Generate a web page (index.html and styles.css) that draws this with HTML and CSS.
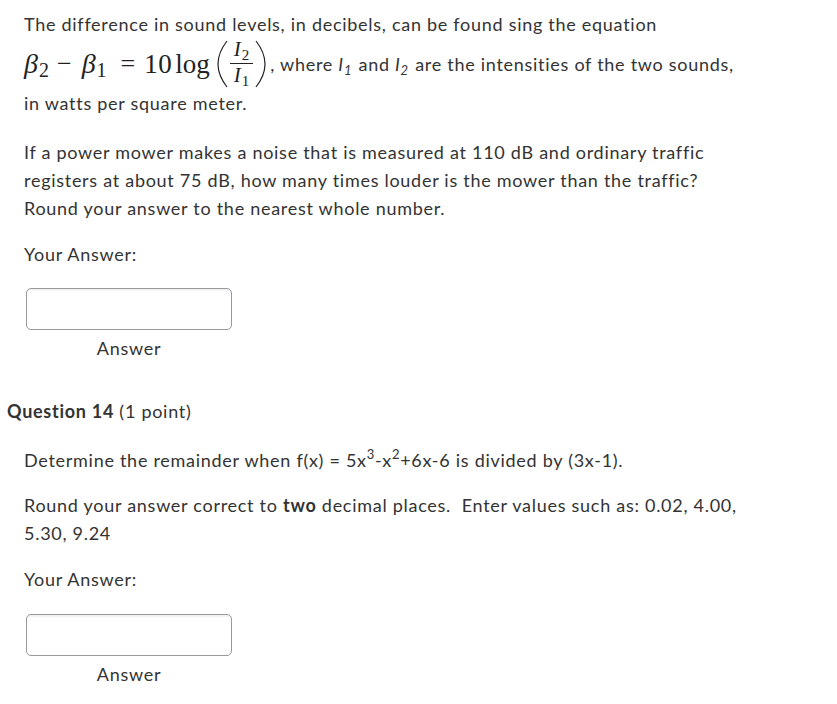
FILE: index.html
```html
<!DOCTYPE html>
<html>
<head>
<meta charset="utf-8">
<link rel="stylesheet" href="styles.css">
</head>
<body>
<div class="page">
  <div class="qbody first">
    <div class="para p1">
      <div class="line">The difference in sound levels, in decibels, can be found sing the equation</div>
      <div class="eq-line">
        <span class="math">
          <span class="mi b2">β</span><span class="sub">2</span>
          <span class="mo minus">−</span>
          <span class="mi">β</span><span class="sub">1</span>
          <span class="mo eq">=</span>
          <span class="mn">10</span><span class="fn">log</span>
          <svg class="paren" width="12" height="48" viewBox="0 0 12 48"><path d="M11 1 C4 10 2 18 2 24 C2 30 4 38 11 47" fill="none" stroke="#222" stroke-width="1.2"/></svg>
          <span class="frac">
            <span class="num"><i>I</i><span class="fsub">2</span></span>
            <span class="den"><i>I</i><span class="fsub">1</span></span>
          </span>
          <svg class="paren" width="12" height="48" viewBox="0 0 12 48"><path d="M1 1 C8 10 10 18 10 24 C10 30 8 38 1 47" fill="none" stroke="#222" stroke-width="1.2"/></svg>
        </span>
        <span class="after">, where <i>I<sub>1</sub></i> and <i>I<sub>2</sub></i> are the intensities of the two sounds,</span>
      </div>
      <div class="line">in watts per square meter.</div>
    </div>
    <p class="para p2">If a power mower makes a noise that is measured at 110 dB and ordinary traffic registers at about 75 dB, how many times louder is the mower than the traffic? Round your answer to the nearest whole number.</p>
    <p class="your">Your Answer:</p>
    <div class="answer-box"><div class="input"></div><div class="label">Answer</div></div>
  </div>

  <h2 class="qtitle"><b>Question 14</b> (1 point)</h2>

  <div class="qbody">
    <p class="para p3">Determine the remainder when f(x) = 5x<sup>3</sup>-x<sup>2</sup>+6x-6 is divided by (3x-1).</p>
    <p class="para p4">Round your answer correct to <b>two</b> decimal places.&nbsp; Enter values such as: 0.02, 4.00, 5.30, 9.24</p>
    <p class="your y2">Your Answer:</p>
    <div class="answer-box second"><div class="input"></div><div class="label">Answer</div></div>
  </div>
</div>
</body>
</html>
```
FILE: styles.css
```css
html, body { margin: 0; padding: 0; background: #fff; }
body {
  font-family: Lato, "Open Sans", sans-serif;
  font-size: 18px;
  letter-spacing: 0.72px;
  color: #333;
  line-height: 28px;
}
.page { padding-top: 10px; }
.qbody { padding-left: 24px; width: 724px; }
.para, .your { margin: 0; }
.line { height: 28px; white-space: nowrap; }
.eq-line { display: flex; align-items: center; height: 51px; white-space: nowrap; }
.math { display: flex; align-items: center; font-family: "Liberation Serif", "DejaVu Serif", serif; font-size: 26px; color: #222; letter-spacing: 0; line-height: 30px; }
.mi { font-style: italic; font-size: 28px; }
.sub { font-size: 20px; position: relative; top: 6px; margin-left: 1px; }
.mo.minus { margin: 0 10px 0 8px; }
.mo.eq { margin: 0 9px 0 14px; }
.mn, .fn { font-size: 27px; }
.mn { letter-spacing: 0.5px; }
.fn { margin-left: 3px; }
.paren { display: block; margin-left: 6px; }
.paren + .frac { margin-left: 2px; }
.frac + .paren { margin-left: 2px; }
.frac { display: flex; flex-direction: column; align-items: center; font-size: 21px; line-height: 21px; }
.frac i { font-style: italic; }
.num { border-bottom: 1px solid #222; padding: 0 4px 1px; }
.den { padding: 1px 4px 0; }
.fsub { font-size: 15px; position: relative; top: 4px; margin-left: 1px; }
.after { margin-left: 3px; }
.after i { font-style: italic; }
.after sub { font-size: 13px; vertical-align: -4px; line-height: 0; margin-right: 1px; }
.p2 { margin-top: 21px; }
.your { margin-top: 18px; }
.answer-box { margin-left: 2px; margin-top: 20px; width: 206px; }
.answer-box.second { margin-top: 21px; }
.input {
  box-sizing: border-box;
  height: 42px;
  border: 1px solid #999;
  border-radius: 5px;
  background: #fff;
  box-shadow: inset 0 2px 2px rgba(40,70,110,0.07);
}
.label { text-align: center; margin-top: 4px; }
.qtitle { margin: 35px 0 0 7px; font-size: 18px; font-weight: normal; line-height: 28px; }
.qtitle b { font-weight: bold; }
.p3 { margin-top: 21px; }
.p3 sup { font-size: 13px; line-height: 0; vertical-align: 8px; }
.p4 { margin-top: 17px; }
.p4 b { font-weight: bold; }
.your.y2 { margin-top: 18px; }
```
